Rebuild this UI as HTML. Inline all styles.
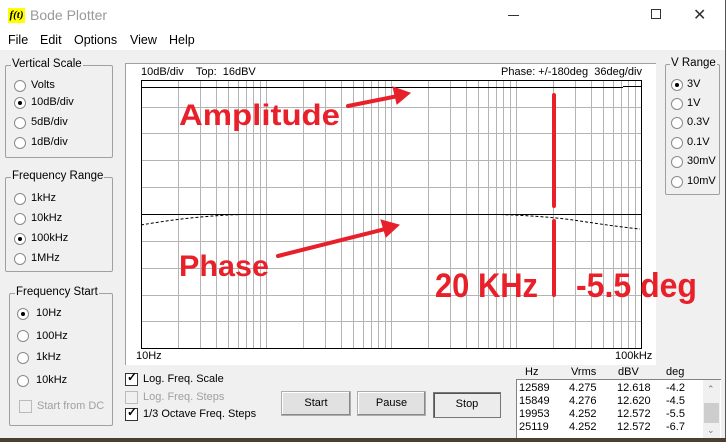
<!DOCTYPE html>
<html><head><meta charset="utf-8">
<style>
*{margin:0;padding:0;box-sizing:border-box}
body{width:726px;height:442px;overflow:hidden;background:#f0f0f0;font-family:"Liberation Sans",sans-serif;font-size:11px;color:#000;position:relative}
.a{position:absolute;white-space:nowrap}
.gb{position:absolute;border:1px solid #a0a0a0;border-radius:2px}
.gb .t{position:absolute;top:-8px;left:5px;background:#f0f0f0;padding:0 1px;font-size:11.5px}
.r{position:absolute;width:12px;height:12px;border-radius:50%;border:1px solid #8a8a8a;background:#fff}
.r.on::after{content:"";position:absolute;left:3px;top:3px;width:4px;height:4px;border-radius:50%;background:#000}
.cb{position:absolute;width:13px;height:13px;border:1px solid #333;background:#fff}
.cb.d{border-color:#bbb;background:#f0f0f0}
.btn{position:absolute;border:1px solid #adadad;background:#e1e1e1;text-align:center;line-height:23px;box-shadow:inset -1px -1px 0 #888, inset 1px 1px 0 #fff}
</style></head><body>
<div class="a" style="left:0;top:0;width:726px;height:50px;background:#fff"></div>
<div class="a" style="left:725px;top:0;width:1px;height:442px;background:#555"></div>
<div class="a" style="left:8px;top:8px;width:17px;height:15px;background:#ffff00;font:bold italic 11px 'Liberation Serif',serif;line-height:15px;text-align:center">f(t)</div>
<div class="a" style="left:30px;top:7px;font-size:14px;color:#999">Bode Plotter</div>
<div class="a" style="left:508px;top:15px;width:11px;height:1px;background:#333"></div>
<div class="a" style="left:651px;top:9px;width:10px;height:10px;border:1px solid #333"></div>
<div class="a" style="left:693px;top:5px;font-size:16px;color:#333">✕</div>
<div class="a" style="left:8px;top:33px;font-size:12.5px">File</div>
<div class="a" style="left:40px;top:33px;font-size:12.5px">Edit</div>
<div class="a" style="left:74px;top:33px;font-size:12.5px">Options</div>
<div class="a" style="left:130px;top:33px;font-size:12.5px">View</div>
<div class="a" style="left:169px;top:33px;font-size:12.5px">Help</div>

<div class="gb" style="left:5px;top:65px;width:108px;height:93px"><span class="t">Vertical Scale</span></div>
<div class="r" style="left:14px;top:80px"></div><div class="a" style="left:31px;top:79px">Volts</div>
<div class="r on" style="left:14px;top:97px"></div><div class="a" style="left:31px;top:96px">10dB/div</div>
<div class="r" style="left:14px;top:117px"></div><div class="a" style="left:31px;top:116px">5dB/div</div>
<div class="r" style="left:14px;top:137px"></div><div class="a" style="left:31px;top:136px">1dB/div</div>

<div class="gb" style="left:5px;top:177px;width:108px;height:95px"><span class="t">Frequency Range</span></div>
<div class="r" style="left:14px;top:193px"></div><div class="a" style="left:31px;top:192px">1kHz</div>
<div class="r" style="left:14px;top:213px"></div><div class="a" style="left:31px;top:212px">10kHz</div>
<div class="r on" style="left:14px;top:233px"></div><div class="a" style="left:31px;top:232px">100kHz</div>
<div class="r" style="left:14px;top:253px"></div><div class="a" style="left:31px;top:252px">1MHz</div>

<div class="gb" style="left:9px;top:293px;width:104px;height:133px"><span class="t">Frequency Start</span></div>
<div class="r on" style="left:17px;top:308px"></div><div class="a" style="left:36px;top:307px">10Hz</div>
<div class="r" style="left:17px;top:330px"></div><div class="a" style="left:36px;top:330px">100Hz</div>
<div class="r" style="left:17px;top:352px"></div><div class="a" style="left:36px;top:351px">1kHz</div>
<div class="r" style="left:17px;top:375px"></div><div class="a" style="left:36px;top:374px">10kHz</div>
<div class="cb d" style="left:19px;top:400px"></div><div class="a" style="left:37px;top:400px;color:#a0a0a0">Start from DC</div>

<div class="gb" style="left:665px;top:64px;width:55px;height:131px"><span class="t" style="left:4px">V Range</span></div>
<div class="r on" style="left:671px;top:79px"></div><div class="a" style="left:687px;top:78px">3V</div>
<div class="r" style="left:671px;top:98px"></div><div class="a" style="left:687px;top:97px">1V</div>
<div class="r" style="left:671px;top:117px"></div><div class="a" style="left:687px;top:116px">0.3V</div>
<div class="r" style="left:671px;top:137px"></div><div class="a" style="left:687px;top:136px">0.1V</div>
<div class="r" style="left:671px;top:156px"></div><div class="a" style="left:687px;top:155px">30mV</div>
<div class="r" style="left:671px;top:176px"></div><div class="a" style="left:687px;top:175px">10mV</div>

<div class="a" style="left:125px;top:63px;width:531px;height:302px;background:#fff;border-left:1px solid #a0a0a0;border-top:1px solid #a0a0a0"></div>
<svg class="a" style="left:0;top:0" width="726" height="442" xmlns="http://www.w3.org/2000/svg">
<g stroke="#b4b4b4" stroke-width="1">
<path d="M141 107.5H641M141 133.5H641M141 160.5H641M141 187.5H641M141 241.5H641M141 268.5H641M141 295.5H641M141 321.5H641"/>
<path d="M178.5 80V348M200.5 80V348M216.5 80V348M228.5 80V348M238.5 80V348M246.5 80V348M253.5 80V348M260.5 80V348M266.5 80V348
M303.5 80V348M325.5 80V348M341.5 80V348M353.5 80V348M363.5 80V348M371.5 80V348M378.5 80V348M385.5 80V348M391.5 80V348
M428.5 80V348M450.5 80V348M466.5 80V348M478.5 80V348M488.5 80V348M496.5 80V348M503.5 80V348M510.5 80V348M516.5 80V348
M553.5 80V348M575.5 80V348M591.5 80V348M603.5 80V348M613.5 80V348M621.5 80V348M628.5 80V348M635.5 80V348"/>
</g>
<rect x="141.5" y="80.5" width="500" height="268" fill="none" stroke="#000"/>
<path d="M141 87.5H623M623 86.5H641M141 214.5H641" stroke="#000" stroke-width="1"/>
<path d="M141 225 C170 220 200 216 240 214.5 L500 214.5 C540 216 560 218 580 221 C600 224 620 227 640 229" fill="none" stroke="#000" stroke-dasharray="3,2"/>
<g fill="#e8202a" stroke="#e8202a">
<path d="M554 95V206M554 221V295" stroke-width="4" stroke-linecap="round"/>
<path d="M348 106L398 96" stroke-width="4" stroke-linecap="round"/>
<path d="M410 93L393 87L397 104Z" stroke-width="1"/>
<path d="M278 256L385 229" stroke-width="4" stroke-linecap="round"/>
<path d="M399 225L381 220L386 237Z" stroke-width="1"/>
</g>
<g font-family="Liberation Sans, sans-serif" font-weight="bold" fill="#e8202a" stroke="none">
<text x="179" y="125" font-size="30" textLength="161" lengthAdjust="spacingAndGlyphs">Amplitude</text>
<text x="179" y="276" font-size="30" textLength="90" lengthAdjust="spacingAndGlyphs">Phase</text>
<text x="435" y="297" font-size="34" textLength="103" lengthAdjust="spacingAndGlyphs">20 KHz</text>
<text x="576" y="297" font-size="34" textLength="121" lengthAdjust="spacingAndGlyphs">-5.5 deg</text>
</g>
</svg>
<div class="a" style="left:141px;top:66px">10dB/div&nbsp;&nbsp;&nbsp; Top:&nbsp; 16dBV</div>
<div class="a" style="left:501px;top:66px">Phase: +/-180deg&nbsp; 36deg/div</div>
<div class="a" style="left:136px;top:350px">10Hz</div>
<div class="a" style="left:615px;top:350px">100kHz</div>

<div class="cb" style="left:125px;top:373px"></div><div class="a" style="left:127px;top:370px;font-size:12px;font-weight:bold">✓</div><div class="a" style="left:143px;top:373px">Log. Freq. Scale</div>
<div class="cb d" style="left:125px;top:391px"></div><div class="a" style="left:143px;top:391px;color:#a0a0a0">Log. Freq. Steps</div>
<div class="cb" style="left:125px;top:408px"></div><div class="a" style="left:127px;top:405px;font-size:12px;font-weight:bold">✓</div><div class="a" style="left:143px;top:408px">1/3 Octave Freq. Steps</div>

<div class="btn" style="left:281px;top:391px;width:70px;height:25px">Start</div>
<div class="btn" style="left:357px;top:391px;width:69px;height:25px">Pause</div>
<div class="btn" style="left:433px;top:392px;width:68px;height:26px;box-shadow:inset 1px 1px 0 #555;background:#ececec;border-color:#777">Stop</div>

<div class="a" style="left:525px;top:366px">Hz</div>
<div class="a" style="left:571px;top:366px">Vrms</div>
<div class="a" style="left:618px;top:366px">dBV</div>
<div class="a" style="left:666px;top:366px">deg</div>
<div class="a" style="left:516px;top:379px;width:205px;height:59px;background:#fff;border:1px solid #828282;border-right:none;border-bottom:none;line-height:13px">
<div class="a" style="left:2px;top:2px">12589<br>15849<br>19953<br>25119</div>
<div class="a" style="left:52px;top:2px">4.275<br>4.276<br>4.252<br>4.252</div>
<div class="a" style="left:100px;top:2px">12.618<br>12.620<br>12.572<br>12.572</div>
<div class="a" style="left:149px;top:2px">-4.2<br>-4.5<br>-5.5<br>-6.7</div>
<div class="a" style="left:186px;top:0;width:17px;height:58px;background:#f0f0f0"></div>
<div class="a" style="left:187px;top:23px;width:15px;height:20px;background:#cdcdcd"></div>
<div class="a" style="left:190px;top:3px;font-size:9px;color:#777">&#8963;</div>
<div class="a" style="left:190px;top:44px;font-size:9px;color:#777">&#8964;</div>
</div>
<div class="a" style="left:0;top:438px;width:726px;height:4px;background:#4a3f30"></div>
</body></html>
